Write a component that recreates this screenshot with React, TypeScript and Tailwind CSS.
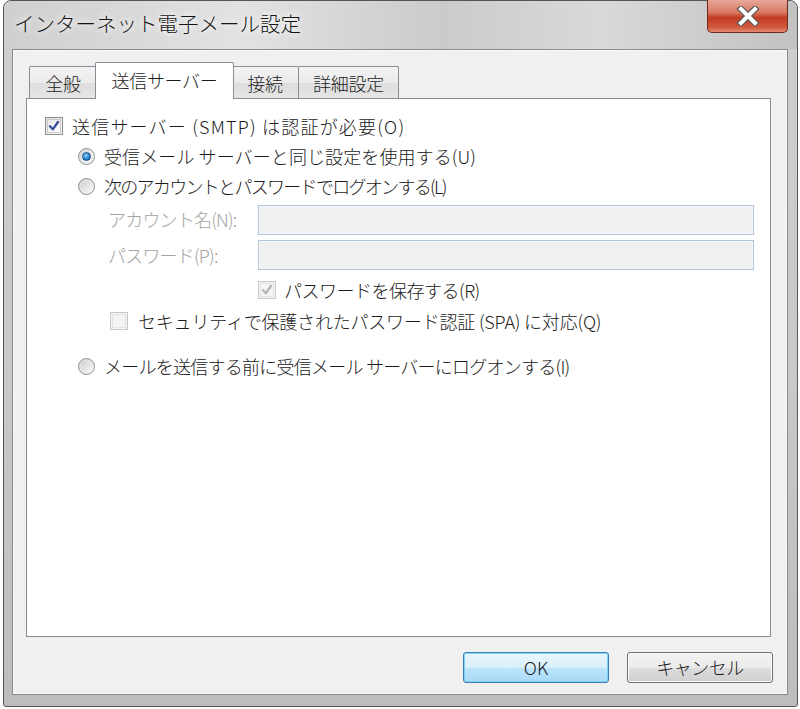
import React from 'react';

const FONT = { fontFamily: '"Meiryo UI", "Noto Sans CJK JP", "Noto Sans", sans-serif' };

function CheckBox({ checked, disabled }: { checked?: boolean; disabled?: boolean }) {
  return (
    <div
      className={`flex h-[18px] w-[18px] shrink-0 items-center justify-center border ${
        disabled ? 'border-[#c8c8c8] bg-[#f4f4f4]' : 'border-[#8e8f8f] bg-[linear-gradient(135deg,#dcdcdc,#fbfbfb)]'
      }`}
    >
      <div className={`flex h-[14px] w-[14px] items-center justify-center border ${disabled ? 'border-[#e4e4e4]' : 'border-[#c9c9c9] bg-[linear-gradient(135deg,#e6e6e6,#ffffff)]'}`}>
        {checked && (
          <svg width="12" height="12" viewBox="0 0 12 12">
            <path
              d="M2 6.2 L4.8 9.4 L10 2"
              fill="none"
              stroke={disabled ? '#b4b4b4' : '#34489a'}
              strokeWidth="2.2"
              strokeLinecap="round"
              strokeLinejoin="round"
            />
          </svg>
        )}
      </div>
    </div>
  );
}

function Radio({ checked }: { checked?: boolean }) {
  return (
    <div className="flex h-[17px] w-[17px] shrink-0 items-center justify-center rounded-full border border-[#8e8f8f] bg-[linear-gradient(135deg,#d4d4d4,#fbfbfb)]">
      {checked ? (
        <div className="h-[9px] w-[9px] rounded-full border border-[#1d4e7f] bg-[radial-gradient(circle_at_40%_35%,#8fd2ff_0%,#2a8ad4_55%,#15508c_100%)]" />
      ) : (
        <div className="h-[11px] w-[11px] rounded-full bg-[linear-gradient(135deg,#cfcfcf,#f6f6f6)]" />
      )}
    </div>
  );
}

function Tab({ label, selected, width }: { label: string; selected?: boolean; width: string }) {
  if (selected) {
    return (
      <div
        className={`relative z-10 -mb-px -ml-[2px] -mr-[2px] flex h-[37px] ${width} items-center justify-center rounded-t-[2px] border border-b-0 border-[#898c95] bg-white pb-[2px] text-[18px] tracking-[-0.3px] text-[#1a1a1a]`}
      >
        {label}
      </div>
    );
  }
  return (
    <div
      className={`flex h-[32px] ${width} -ml-px items-center justify-center rounded-t-[2px] border border-b-0 border-[#898c95] bg-[linear-gradient(180deg,#f3f3f3_0%,#ebebeb_50%,#dedede_51%,#e5e5e5_100%)] pt-[1px] text-[18px] tracking-[-0.3px] text-[#1a1a1a]`}
    >
      {label}
    </div>
  );
}

export default function App() {
  return (
    <div className="flex h-[709px] w-[800px] bg-white font-light" style={FONT}>
      <div className="mb-[2px] ml-[3px] mr-[2px] flex flex-1 flex-col rounded-t-[8px] rounded-b-[3px] border border-[#555] bg-[linear-gradient(180deg,#d6d6d6_0%,#cdcdcd_8%,#c9c9c9_50%,#bdbdbd_100%)]">
        {/* title bar */}
        <div className="relative flex h-[48px] shrink-0 items-center rounded-t-[8px] bg-[linear-gradient(90deg,#cfcfcf_0%,#e2e2e2_30%,#cbcbcb_55%,#d9d9d9_75%,#c2c2c2_100%)] pl-[10px] pb-[4px]">
          <span className="text-[20.5px] text-[#141414] [text-shadow:0_0_6px_#ffffff,0_0_10px_#ffffff]">
            インターネット電子メール設定
          </span>
          <div className="absolute right-[9px] top-[-1px] flex h-[33px] w-[81px] items-center justify-center rounded-b-[5px] border border-t-0 border-[#6b2a1f] bg-[linear-gradient(180deg,#e9a89a_0%,#d97660_40%,#c23b22_55%,#d05a3e_85%,#e48a70_100%)]">
            <svg width="26" height="20" viewBox="0 0 26 20">
              <path d="M6 3 L20 17 M20 3 L6 17" stroke="#5a5a5a" strokeWidth="6.5" strokeLinecap="square" />
              <path d="M6 3 L20 17 M20 3 L6 17" stroke="#ffffff" strokeWidth="4" strokeLinecap="square" />
            </svg>
          </div>
        </div>

        {/* client */}
        <div className="mb-[11px] ml-[8px] mr-[9px] flex flex-1 flex-col border border-[#8a8a8a] bg-[#f0f0f0] shadow-[inset_0_0_0_1px_#fafafa]">
          <div className="ml-[13px] mr-[16px] mt-[11px] flex flex-col">
            <div className="flex h-[37px] items-end pl-[4px]">
              <Tab label="全般" width="w-[68px]" />
              <Tab label="送信サーバー" selected width="w-[139px]" />
              <Tab label="接続" width="w-[68px]" />
              <Tab label="詳細設定" width="w-[101px]" />
            </div>
            <div className="flex h-[539px] flex-col border border-[#898c95] bg-white pt-[12px] text-[18px] tracking-[-0.5px] text-[#1a1a1a]">
              <div className="flex h-[30px] items-center pl-[18px]">
                <CheckBox checked />
                <span className="ml-[9px] tracking-[1.2px]">送信サーバー (SMTP) は認証が必要(O)</span>
              </div>
              <div className="flex h-[30px] items-center pl-[51px]">
                <Radio checked />
                <span className="ml-[9px] tracking-[0.1px]">受信メール サーバーと同じ設定を使用する(U)</span>
              </div>
              <div className="flex h-[31px] items-center pl-[51px]">
                <Radio />
                <span className="ml-[9px] tracking-[-1.7px]">次のアカウントとパスワードでログオンする(L)</span>
              </div>
              <div className="flex h-[35px] items-center pl-[81px] pr-[16px]">
                <span className="w-[150px] tracking-[-0.8px] text-[#a3a3a3]">アカウント名(N):</span>
                <div className="h-[30px] flex-1 border border-[#b3c5de] bg-[#f0f0f0] shadow-[inset_0_0_0_1px_#f7f7f7]" />
              </div>
              <div className="flex h-[36px] items-center pl-[81px] pr-[16px]">
                <span className="w-[150px] tracking-[-0.8px] text-[#a3a3a3]">パスワード(P):</span>
                <div className="h-[30px] flex-1 border border-[#b3c5de] bg-[#f0f0f0] shadow-[inset_0_0_0_1px_#f7f7f7]" />
              </div>
              <div className="flex h-[34px] items-center pl-[231px]">
                <CheckBox checked disabled />
                <span className="ml-[8px]">パスワードを保存する(R)</span>
              </div>
              <div className="flex h-[28px] items-center pl-[83px]">
                <CheckBox disabled />
                <span className="ml-[10px] tracking-[-0.2px]">セキュリティで保護されたパスワード認証 (SPA) に対応(Q)</span>
              </div>
              <div className="mt-[16px] flex h-[30px] items-center pl-[51px]">
                <Radio />
                <span className="ml-[9px] tracking-[-0.75px]">メールを送信する前に受信メール サーバーにログオンする(I)</span>
              </div>
            </div>
          </div>

          <div className="mr-[14px] mt-[15px] flex justify-end gap-[18px] text-[18px] text-[#1a1a1a]">
            <button className="flex h-[31px] w-[146px] items-center justify-center rounded-[3px] border border-[#3c7fb1] bg-[linear-gradient(180deg,#eaf6fd_0%,#d9f0fc_50%,#bee6fd_51%,#a7d9f5_100%)] shadow-[inset_0_0_0_1px_#7dd3f5]">
              OK
            </button>
            <button className="flex h-[31px] w-[146px] items-center justify-center rounded-[3px] border border-[#707070] bg-[linear-gradient(180deg,#f2f2f2_0%,#ebebeb_50%,#dddddd_51%,#cfcfcf_100%)] shadow-[inset_0_0_0_1px_#fcfcfc] tracking-[-0.5px]">
              キャンセル
            </button>
          </div>
        </div>
      </div>
    </div>
  );
}
